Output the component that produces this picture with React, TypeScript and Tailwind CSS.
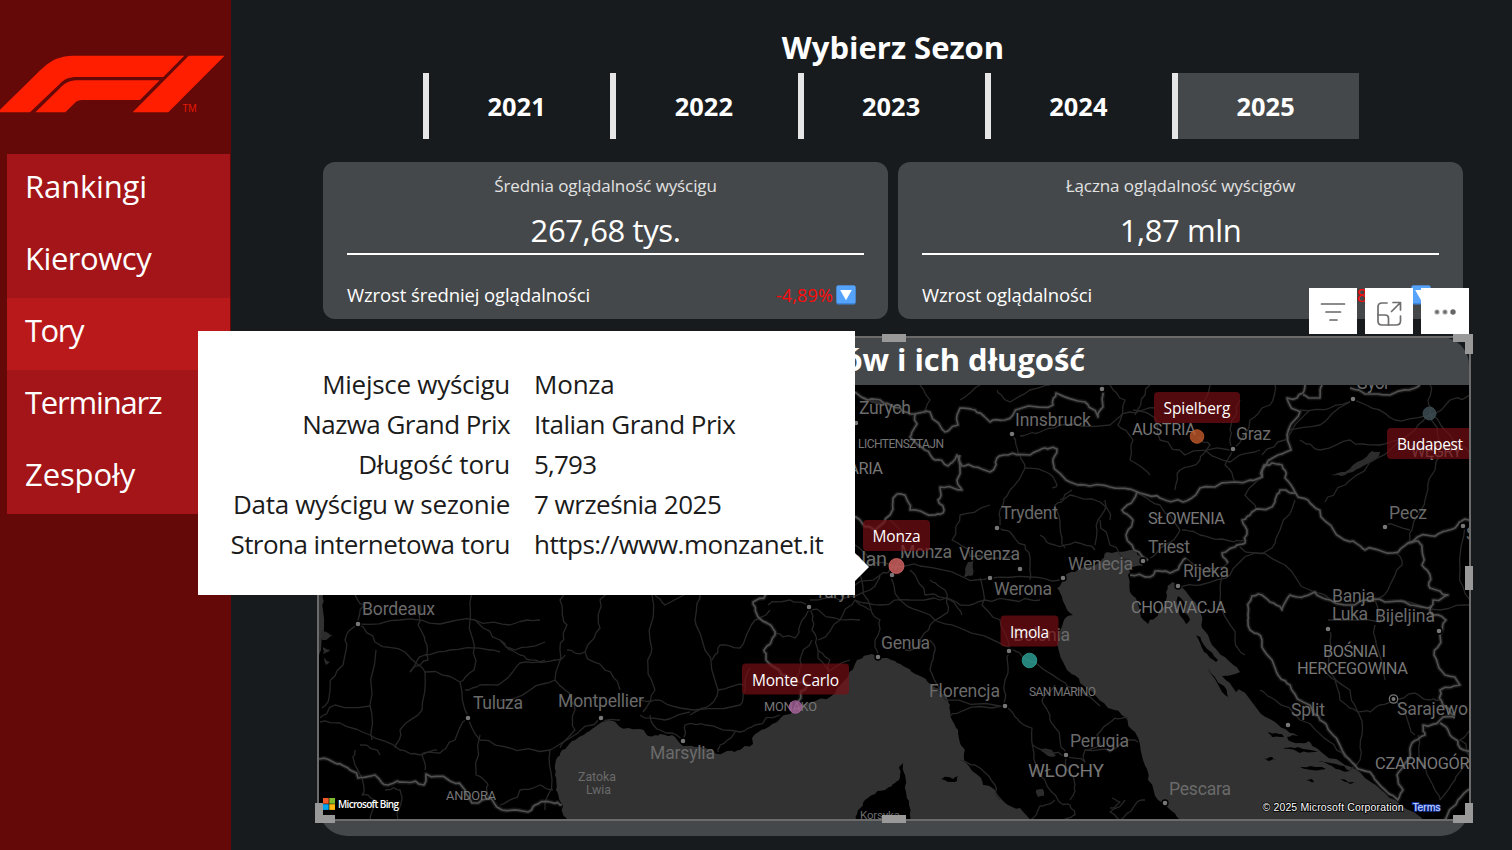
import React from "react";

type Pt = [number, number];

const NAV = [
  { label: "Rankingi", fit: "tracking-[-0.15px]" },
  { label: "Kierowcy", fit: "tracking-[-0.45px]" },
  { label: "Tory", fit: "tracking-[-1.5px]" },
  { label: "Terminarz", fit: "tracking-[-1.2px]" },
  { label: "Zespoły", fit: "tracking-[-0.1px]" },
];
const SEASONS = ["2021", "2022", "2023", "2024", "2025"];

const DETAILS = [
  { label: "Miejsce wyścigu", value: "Monza", lf: "tracking-[-0.28px]", vf: "tracking-[-0.2px]" },
  { label: "Nazwa Grand Prix", value: "Italian Grand Prix", lf: "tracking-[-0.55px]", vf: "tracking-[-0.5px]" },
  { label: "Długość toru", value: "5,793", lf: "tracking-[-0.2px]", vf: "tracking-[-0.8px]" },
  { label: "Data wyścigu w sezonie", value: "7 września 2025", lf: "tracking-[-0.32px]", vf: "tracking-[-0.5px]" },
  { label: "Strona internetowa toru", value: "https://www.monzanet.it", lf: "tracking-[-0.55px]", vf: "tracking-[-0.5px]" },
];

/* ---------- map geometry ---------- */

let seed = 7;
function rnd() {
  seed = (seed * 16807) % 2147483647;
  return seed / 2147483647 - 0.5;
}

function parse(s: string): Pt[] {
  return s.split(" ").map((p) => p.split(",").map(Number) as Pt);
}

// Subdivides a polyline and shifts the new points a little, for coast and border shapes.
function rough(s: string, amp: number, closed = false): string {
  let pts = parse(s);
  if (closed) pts = [...pts, pts[0]];
  for (let pass = 0; pass < 2; pass++) {
    const out: Pt[] = [pts[0]];
    for (let i = 1; i < pts.length; i++) {
      const [ax, ay] = pts[i - 1];
      const [bx, by] = pts[i];
      const d = Math.hypot(bx - ax, by - ay);
      if (d > 4) {
        const k = Math.min(d * 0.35, amp);
        out.push([(ax + bx) / 2 + rnd() * k, (ay + by) / 2 + rnd() * k]);
      }
      out.push([bx, by]);
    }
    pts = out;
  }
  return "M" + pts.map((p) => p[0].toFixed(1) + " " + p[1].toFixed(1)).join("L") + (closed ? "Z" : "");
}

const SEAS = [
  "568,822 563,806 556,790 555,775 556,760 562,750 572,741 585,734 595,727 608,720 613,721 620,727 640,729 648,736 660,734 672,735 683,746 697,747 708,749 717,754 727,751 740,750 753,744 752,738 765,729 777,722 785,715 795,709 812,702 830,697 845,680 855,664 868,655 885,658 895,661 905,667 918,675 930,684 945,695 950,705 952,720 958,733 965,750 966,763 975,773 983,785 995,790 1002,800 1020,808 1032,822",
  "1062,597 1057,588 1062,577 1075,572 1085,567 1100,562 1107,552 1112,553 1130,550 1140,556 1149,560 1142,566 1130,568 1128,575 1132,595 1140,612 1148,624 1155,618 1164,607 1166,592 1172,582 1180,584 1190,597 1200,612 1202,628 1212,645 1230,662 1240,672 1222,676 1240,690 1258,710 1275,722 1290,733 1310,742 1325,755 1345,765 1365,778 1385,793 1400,805 1425,822 1182,822 1165,805 1158,800 1148,780 1143,760 1135,732 1125,717 1108,708 1095,695 1080,683 1067,670 1060,655 1058,647 1060,635 1063,623 1073,615 1065,605",
  "319,590 325,590 323,610 321,650 319,655",
];

const ISLANDS = [
  "856,822 858,810 865,800 872,795 885,790 895,783 899,780 899,768 903,763 905,775 906,792 909,805 909,822",
  "941,779 948,777 953,779 958,776 957,781 948,782",
  "1178,596 1186,604 1184,612 1190,620 1186,624 1179,612",
  "1194,632 1204,645 1218,660 1216,662 1204,652",
  "1208,668 1224,686 1230,700 1222,692",
  "1225,675 1240,688 1236,692",
  "1287,737 1300,736 1312,740 1306,743 1292,742",
  "1268,732 1282,734 1284,737 1272,737",
  "1283,748 1298,747 1318,752 1300,753",
  "1300,767 1320,767 1326,769 1306,769",
  "1318,762 1336,764 1350,771 1336,769",
  "1264,759 1272,757 1276,760 1268,761",
  "1306,780 1312,779 1314,782",
  "1340,779 1356,783 1350,784",
  "1222,640 1250,662 1258,684 1245,670",
];

const LAKES = [
  "1330,475 1345,472 1362,460 1372,451 1380,452 1376,459 1360,468 1345,475",
  "964,577 968,562 974,560 973,575",
  "322,630 333,636 322,640",
  "323,647 330,650 323,654",
  "324,658 330,662 326,665",
  "860,396 868,400 876,400 884,404 876,405 866,402",
  "1040,749 1052,750 1056,756 1048,756",
  "1036,790 1043,789 1044,796 1038,797",
];

const BORDERS = [
  "855,392 868,400 880,400 900,408 915,414 917,424 910,437 925,450 935,460 948,466 957,455 962,466 975,467 990,472 997,458 1008,455 1030,455 1045,448 1057,449 1053,462 1066,480 1085,485 1110,487 1140,493 1160,498 1183,502 1200,488 1235,482 1262,477 1264,465 1272,463 1282,465 1285,478 1295,492 1310,503 1325,521 1340,537 1353,541 1365,550 1393,553 1408,543 1432,536 1440,533 1455,528 1463,520 1472,521",
  "915,414 930,412 945,432 958,425 960,408 975,410 990,422 1005,420 1022,408 1053,405 1056,393 1085,402 1098,417 1103,407 1102,385",
  "960,455 957,480 962,490 940,487 938,500 943,513 935,515 910,510 905,495 897,494 890,515 875,530 860,520 850,512",
  "1137,492 1122,510 1133,520 1126,535 1134,550 1148,560",
  "1130,575 1150,577 1155,571 1170,573 1182,562 1186,558 M",
  "1228,563 1222,553 1235,547 1245,543 1247,530 1242,520 1252,512 1275,502 1280,490 1295,493",
  "1408,543 1418,541 1422,565 1430,575 1430,588 1448,595 1433,600 1432,615 1446,620 1440,635 1434,655 1445,675 1460,685 1440,690 1443,705 1455,716",
  "1432,607 1410,605 1385,602 1365,600 1345,605 1330,600 1315,592 1305,596 1290,595 1282,610 1270,602 1262,595 1252,596 1248,615 1250,630 1262,640 1272,660 1278,675 1290,685 1303,702 1320,720 1333,735 1345,755 1355,765 1370,772 1385,790 1398,800 1403,790 1397,775 1410,758 1412,743 1425,735 1423,725 1440,720 1455,718",
  "770,592 753,602 758,617 772,627 775,635 764,650 766,660 782,675 795,680 808,685 798,702",
  "319,759 335,763 348,768 358,778 375,775 388,785 402,782 424,785 426,774 450,781 465,790 472,803 490,798 502,810 528,812 535,805 550,802 562,805",
  "1305,385 1303,393 1287,398 1296,410 1300,412 1287,435 1291,450 1278,455 1262,470 1262,478",
  "1303,395 1320,398 1322,385",
  "1350,388 1365,394 1390,395 1415,388 1420,385",
  "1440,723 1450,735 1460,748 1472,751",
  "1443,822 1458,800 1470,789",
].map((s) => s.replace(" M", ""));

const ROADS = [
  "920,385 930,400 925,414", "960,400 980,385", "997,390 1010,402 1030,390 1050,385",
  "1020,436 1040,432 1060,425 1110,425 1130,412 1155,408", "1012,435 1018,452 1025,468 1010,490 1000,510 997,528",
  "1025,468 1050,474 1057,485 1052,488", "997,528 1010,532 1025,545 1030,560 1030,580",
  "990,505 960,515 952,540 970,556 990,558 1012,556", "1060,500 1072,490", "1040,535 1055,545 1075,542 1095,550",
  "1105,500 1098,520 1095,545", "1065,548 1060,525 1055,505 1070,495 1100,502 1110,520",
  "855,545 870,560 895,567 920,566 965,578 990,578 1030,577 1060,580", "855,585 880,575 895,566", "890,575 900,600 930,615 960,628 1010,648 1030,661 1060,680",
  "870,560 860,575 868,600 880,620 875,640 878,655", "880,575 870,590 840,600 810,600", "895,570 905,550 900,530 890,520",
  "855,600 880,605 910,600 940,600 960,605 985,600 1010,600 1040,600", "930,580 945,590 948,612", "980,578 982,605 1000,620 1010,650",
  "910,570 925,595 950,600 962,615", "1010,651 1005,680 1002,706 960,712 950,716", "1002,706 1012,712 1020,722 1032,728 1033,748 1036,770 1050,790 1058,800",
  "1058,800 1070,805 1075,815 1062,820", "1055,685 1042,700 1050,720 1060,740 1066,756 1070,772 1075,785 1070,800", "1033,745 1050,752 1066,756",
  "1066,756 1085,762 1085,750 1100,745 1097,735 1115,718 1128,718", "1085,750 1110,752 1125,742 1138,742", "1055,800 1040,806 1030,820",
  "1125,800 1110,812 1120,820 1135,805 1145,800", "1112,798 1120,802 1110,808",
  "960,760 980,768 995,785 1000,800", "930,684 945,700 1000,706",
  "1060,680 1080,690 1100,706", "930,640 935,650 930,670 940,690", "905,650 920,645 930,625 948,612",
  "1110,385 1125,400 1118,425 1133,440 1130,460 1150,475", "1133,410 1155,418 1160,440 1185,455 1230,450", "1197,437 1210,445 1200,460 1180,470 1175,490",
  "1233,449 1225,465 1235,482", "1233,449 1250,420 1270,405 1275,385", "1205,450 1230,462 1260,450", "1240,400 1230,430 1232,448",
  "1287,430 1320,425 1350,402", "1300,410 1330,408 1352,400 1380,410 1395,420 1425,416", "1430,415 1415,430 1395,445 1370,462 1345,485 1325,502",
  "1430,415 1440,445 1435,470 1425,500 1412,530 1408,543", "1430,415 1450,435 1470,455", "1430,415 1450,400 1470,395", "1430,415 1428,400 1430,385",
  "1300,440 1320,450 1350,440 1380,445 1400,440", "1262,455 1285,440 1310,410", "1262,478 1245,495 1256,510", "1295,500 1280,530 1272,548 1255,553",
  "1255,553 1240,547", "1255,553 1230,575 1200,585 1178,585", "1255,553 1285,565 1310,590 1330,600", "1182,530 1200,535 1230,541 1245,540",
  "1137,493 1160,505 1180,530", "1180,530 1165,545 1150,558", "1328,625 1330,640 1328,670 1350,690 1358,712", "1328,620 1380,622 1375,600 1390,585 1402,565 1395,553",
  "1375,625 1378,650 1385,680", "1222,575 1222,610 1235,640 1245,655", "1260,690 1275,700 1300,720 1330,742 1345,758",
  "1393,699 1380,705 1370,712 1358,712 1340,700 1335,680 1320,665", "1358,712 1362,735 1360,760 1350,770", "1393,699 1405,712 1415,735",
  "1393,699 1415,693 1430,700 1440,700", "1418,735 1420,760 1435,790 1440,800", "1470,730 1460,740 1470,760 1455,780 1440,800",
  "1385,525 1410,530", "1465,525 1460,570 1470,600", "1400,600 1440,610 1470,605",
  "1135,415 1145,395 1150,385", "1210,385 1205,400 1185,410", "1100,520 1110,545 1130,560",
  "357,624 375,642 405,652 425,672 460,682 468,716", "357,624 345,640 343,665 330,690 322,708", "357,622 365,605 352,592",
  "357,624 400,620 440,624 475,620 510,625 540,620", "420,605 418,625 427,645 428,660 410,672", "410,672 425,655 450,650 490,650 500,652",
  "472,592 473,640 474,670 460,682", "475,620 500,640 515,650 545,642", "500,640 520,655 530,660 555,660 565,655", "545,660 520,663 505,680 480,685 465,690",
  "500,700 530,690 555,680 560,650 567,625 560,600 565,592", "567,650 585,652 605,670 620,690", "585,652 600,628 600,600 608,592",
  "555,680 565,690 575,710 575,730 560,748", "468,718 455,740 440,753 420,755 400,750 370,735 340,723 320,722",
  "468,718 480,740 510,748 550,750 570,738 600,718", "480,735 476,775 488,785 490,800", "320,718 335,705 370,706", "376,650 370,705 372,740",
  "425,672 422,710 400,730 395,748", "355,750 355,765 362,778 362,795 375,800 370,820", "360,745 380,755", "550,750 552,780 545,810",
  "500,805 520,790 540,785 553,790", "385,790 400,790 398,820", "437,750 422,755 425,770",
  "600,718 620,720", "652,595 650,640 648,668 655,690 643,712", "655,595 665,605 690,592", "700,592 695,620 705,650 718,690 705,708 690,715",
  "640,715 665,720 690,712", "640,700 655,700 680,708 740,705 745,690 750,668", "683,743 685,725 705,725 740,732 755,725 780,715",
  "683,740 660,730 650,715", "735,732 720,745 718,752", "712,660 720,645 740,648 755,620 770,610", "718,690 745,685",
  "809,607 790,600 768,605", "809,607 812,630 818,650 830,670", "809,610 835,618 860,620", "775,633 795,638 800,625 809,610",
  "812,640 800,660 795,680", "818,640 840,620 855,600 870,610", "818,650 830,660 828,672 850,660",
  "1228,563 1205,572 1186,558",
];

const CITIES: Pt[] = [
  [1102, 389], [856, 423], [1012, 434], [1233, 449], [1353, 399], [997, 528], [1020, 569], [990, 578], [892, 575],
  [1063, 578], [1143, 561], [1178, 586], [1385, 527], [1463, 526], [1328, 629], [1439, 631], [1288, 725],
  [1165, 803], [1066, 755], [1005, 706], [1009, 651], [878, 657], [809, 607], [683, 741], [601, 718], [468, 718], [358, 624],
];

type Label = { t: string; x: number; y: number; w: number; s: number; c?: string };
const LABELS: Label[] = [
  { t: "Zurych", x: 859, y: 413.5, w: 52, s: 17.6 },
  { t: "Innsbruck", x: 1015, y: 425.5, w: 76, s: 17.6 },
  { t: "LICHTENSZTAJN", x: 858, y: 448, w: 86, s: 12, c: "#777" },
  { t: "SZWAJCARIA", x: 787, y: 473.5, w: 96, s: 16.4, c: "#777" },
  { t: "AUSTRIA", x: 1132, y: 435, w: 64, s: 16.4, c: "#777" },
  { t: "Graz", x: 1236, y: 440, w: 35, s: 17.6 },
  { t: "Győr", x: 1356, y: 389, w: 34, s: 17.6 },
  { t: "WĘGRY", x: 1411, y: 457, w: 51, s: 16.4, c: "#777" },
  { t: "Trydent", x: 1001, y: 519, w: 57, s: 17.6 },
  { t: "Monza", x: 900, y: 557.5, w: 52, s: 17.6 },
  { t: "Vicenza", x: 959, y: 560, w: 61, s: 17.6 },
  { t: "Mediolan", x: 808, y: 566, w: 79, s: 20 },
  { t: "Werona", x: 994, y: 594.5, w: 58, s: 17.6 },
  { t: "Wenecja", x: 1068, y: 569.5, w: 65, s: 17.6 },
  { t: "SŁOWENIA", x: 1148, y: 524, w: 77, s: 16.4, c: "#777" },
  { t: "Triest", x: 1148, y: 552.5, w: 42, s: 17.6 },
  { t: "Rijeka", x: 1183, y: 576.5, w: 46, s: 17.6 },
  { t: "CHORWACJA", x: 1131, y: 612.5, w: 95, s: 16.4, c: "#777" },
  { t: "Pecz", x: 1389, y: 519, w: 38, s: 17.6 },
  { t: "Segedyn", x: 1466, y: 540, w: 60, s: 17.6 },
  { t: "Banja", x: 1332, y: 602, w: 43, s: 17.6 },
  { t: "Luka", x: 1332, y: 620, w: 36, s: 17.6 },
  { t: "Bijeljina", x: 1375, y: 622, w: 60, s: 17.6 },
  { t: "BOŚNIA I", x: 1323, y: 657, w: 63, s: 16.4, c: "#777" },
  { t: "HERCEGOWINA", x: 1297, y: 674, w: 111, s: 16.4, c: "#777" },
  { t: "Split", x: 1291, y: 716, w: 34, s: 17.6 },
  { t: "Sarajewo", x: 1397, y: 715, w: 71, s: 17.6 },
  { t: "CZARNOGÓRA", x: 1375, y: 769, w: 105, s: 16.4, c: "#777" },
  { t: "Pescara", x: 1169, y: 795, w: 62, s: 17.6 },
  { t: "Perugia", x: 1070, y: 747, w: 59, s: 17.6 },
  { t: "WŁOCHY", x: 1028, y: 777, w: 76, s: 19, c: "#777" },
  { t: "SAN MARINO", x: 1029, y: 695.5, w: 67, s: 12, c: "#777" },
  { t: "Florencja", x: 929, y: 697, w: 71, s: 17.6 },
  { t: "Bolonia", x: 1013, y: 641, w: 57, s: 17.6 },
  { t: "Genua", x: 881, y: 649, w: 49, s: 17.6 },
  { t: "Turyn", x: 815, y: 598, w: 41, s: 17.6 },
  { t: "MONAKO", x: 764, y: 711, w: 53, s: 12.8, c: "#777" },
  { t: "Marsylia", x: 650, y: 759, w: 65, s: 17.6 },
  { t: "Montpellier", x: 558, y: 707, w: 86, s: 17.6 },
  { t: "Tuluza", x: 473, y: 708.5, w: 50, s: 17.6 },
  { t: "Bordeaux", x: 362, y: 615, w: 73, s: 17.6 },
  { t: "ANDORA", x: 446, y: 800, w: 50, s: 12.8, c: "#777" },
  { t: "Zatoka", x: 578, y: 781, w: 38, s: 12.4 },
  { t: "Lwia", x: 586, y: 794, w: 25, s: 12.4 },
  { t: "Korsyka", x: 860, y: 819, w: 40, s: 11.5 },
];

type Circuit = { name: string; x: number; y: number; w: number; tw: number; cx: number; cy: number; r: number; color: string };
const CIRCUITS: Circuit[] = [
  { name: "Spielberg", x: 1154, y: 392, w: 86, tw: 67, cx: 1197, cy: 436.5, r: 6.8, color: "#c25a2b" },
  { name: "Budapest", x: 1387, y: 428, w: 86, tw: 66, cx: 1429.5, cy: 413.5, r: 6.5, color: "#405056" },
  { name: "Monza", x: 863, y: 520, w: 67, tw: 48, cx: 896.5, cy: 566, r: 7.5, color: "#d96565" },
  { name: "Imola", x: 1000.5, y: 615.5, w: 58, tw: 39, cx: 1029.5, cy: 660.5, r: 7.3, color: "#2fa49b" },
  { name: "Monte Carlo", x: 742, y: 663.5, w: 107, tw: 87, cx: 795.5, cy: 707, r: 6.3, color: "#a8639b" },
];

const seaPaths = SEAS.map((s) => rough(s, 4, true));
const islandPaths = ISLANDS.map((s) => rough(s, 3, true));
const lakePaths = LAKES.map((s) => rough(s, 2, true));
const borderPaths = BORDERS.map((s) => rough(s, 6));
const roadPaths = ROADS.map((s) => rough(s, 5));

function CircuitMap() {
  return (
    <svg viewBox="319 385 1150 436" className="block h-[436px] w-[1150px] bg-black" fontFamily="Roboto, sans-serif">
      <g fill="#323232">{seaPaths.map((d, i) => <path key={i} d={d} />)}</g>
      <g fill="#000">{islandPaths.map((d, i) => <path key={i} d={d} />)}</g>
      <g fill="#2c2c2c">{lakePaths.map((d, i) => <path key={i} d={d} />)}</g>
      <g fill="none" stroke="#272727" strokeWidth="1.3" strokeLinejoin="round">
        {roadPaths.map((d, i) => <path key={i} d={d} />)}
      </g>
      <g fill="none" stroke="#2a2a2a" strokeWidth="4.5" strokeOpacity="0.5" strokeLinejoin="round">
        {borderPaths.map((d, i) => <path key={i} d={d} />)}
      </g>
      <g fill="none" stroke="#505050" strokeWidth="1.7" strokeLinejoin="round">
        {borderPaths.map((d, i) => <path key={i} d={d} />)}
      </g>
      {CITIES.map(([x, y], i) => (
        <circle key={i} cx={x} cy={y} r="3" fill="#777" stroke="#000" strokeWidth="1.4" />
      ))}
      <circle cx="1393.5" cy="699" r="4.2" fill="#000" stroke="#777" strokeWidth="1.2" />
      <circle cx="1393.5" cy="699" r="2" fill="#777" />
      {LABELS.map((l) => (
        <text key={l.t} x={l.x} y={l.y} fontSize={l.s} textLength={l.w} fill={l.c ?? "#6a6a6a"}>
          {l.t}
        </text>
      ))}
      {CIRCUITS.map((c) => (
        <g key={c.name}>
          <circle cx={c.cx} cy={c.cy} r={c.r} fill={c.color} fillOpacity="0.8" stroke={c.color} strokeWidth="0.8" />
          <rect x={c.x} y={c.y} width={c.w} height="31" rx="4" fill="#790f14" fillOpacity="0.68" />
          <text
            x={c.x + (c.w - c.tw) / 2}
            y={c.y + 22}
            fontSize="15.5"
            fontWeight="500"
            textLength={c.tw}
            fill="#fff"
            fontFamily="'Open Sans', 'Noto Sans', sans-serif"
          >
            {c.name}
          </text>
        </g>
      ))}
      <rect x="323" y="798" width="5.7" height="5.7" fill="#f1592a" />
      <rect x="329.3" y="798" width="5.7" height="5.7" fill="#80bb2f" />
      <rect x="323" y="804.2" width="5.7" height="5.7" fill="#00a3ee" />
      <rect x="329.3" y="804.2" width="5.7" height="5.7" fill="#fdb913" />
      <text x="338" y="807.5" fontSize="10" fontWeight="600" textLength="61" fill="#fff" fontFamily="'Open Sans', sans-serif">
        Microsoft Bing
      </text>
      <g fontFamily="'Liberation Sans', Arial, sans-serif" fontSize="10.5" stroke="#000" strokeWidth="1.6" paintOrder="stroke">
        <text x="1262.5" y="810.5" textLength="141" fill="#fff">© 2025 Microsoft Corporation</text>
        <text x="1412.5" y="810.5" textLength="28" fill="#cdd8ff" stroke="#1c3fb0">Terms</text>
      </g>
    </svg>
  );
}

function F1Logo() {
  return (
    <svg viewBox="0 0 693 200" className="mt-[50px] block h-[66.67px] w-[231px]" fill="#ff1e00">
      <path d="M0 179 L110 71 C148 34 170 17 228 17 H553 L490 81 H232 C205 81 194 87 180 101 L90 187 H0Z" />
      <path d="M106 187 L178 116 C196 98 208 91 235 91 H479 L420 150 H250 C236 150 230 153 222 161 L196 187Z" />
      <path d="M566 17 H674 L505 187 H398Z" />
      <text x="547" y="187" fontSize="30" textLength="43" fillOpacity="0.85" fontFamily="'Liberation Sans', Arial, sans-serif">TM</text>
    </svg>
  );
}

function DownBadge() {
  return (
    <svg viewBox="0 0 20 20" className="ml-[3px] h-5 w-5">
      <rect x="0.5" y="0.5" width="19" height="19" rx="1.5" fill="#3f86dd" />
      <rect x="0.5" y="0.5" width="19" height="17.5" rx="1.5" fill="#55a3fa" />
      <path d="M4.2 5h11.6L10 15.2Z" fill="#fff" />
    </svg>
  );
}

function StatCard(p: { title: string; value: string; growth: string; change: string }) {
  return (
    <div className="flex h-[157px] w-[565px] flex-col rounded-xl bg-[#45484a] px-6 text-white">
      <div className="mt-[12px] text-center text-[17px] leading-[24px] tracking-[-0.1px] text-[#e2e2e2]">{p.title}</div>
      <div className="mt-[12px] h-[45px] w-[517px] border-b-2 border-white text-center text-[31px] leading-[40px] tracking-[-0.4px]">
        {p.value}
      </div>
      <div className="mt-[27px] flex h-[26px] items-center pr-2 text-[18.5px] leading-[26px] tracking-[-0.1px]">
        <span className="flex-1">{p.growth}</span>
        <span className="text-[18px] tracking-[0.15px] text-[#ff0a0a]">{p.change}</span>
        <DownBadge />
      </div>
    </div>
  );
}

function VisualToolbar() {
  return (
    <div className="absolute top-[288px] left-[1309px] flex gap-2">
      <div className="h-[46px] w-12 bg-white">
        <svg viewBox="0 0 48 46" className="h-[46px] w-12" stroke="#666" strokeWidth="1.7" strokeLinecap="round">
          <path d="M12.5 16H35.5M17 24H31.5M21 32H28" />
        </svg>
      </div>
      <div className="h-[46px] w-12 bg-white">
        <svg viewBox="0 0 48 46" className="h-[46px] w-12" fill="none" stroke="#6e6e6e" strokeWidth="1.7" strokeLinecap="round" strokeLinejoin="round">
          <path d="M22 15H17Q13 15 13 19V33Q13 37 17 37H31Q35.5 37 35.5 33V28" />
          <path d="M13 27H20Q23.5 27 23.5 30V37" />
          <path d="M26.5 23.5L35 15M28 14.5H35.5V22" />
        </svg>
      </div>
      <div className="h-[46px] w-12 bg-white">
        <svg viewBox="0 0 48 46" className="h-[46px] w-12" fill="#666">
          <circle cx="16" cy="24" r="2.6" fill="#a5a5a5" />
          <circle cx="16" cy="24" r="1.4" />
          <circle cx="24" cy="24" r="2.6" fill="#a5a5a5" />
          <circle cx="24" cy="24" r="1.4" />
          <circle cx="32" cy="24" r="2.7" />
        </svg>
      </div>
    </div>
  );
}

function SelectionFrame() {
  return (
    <div className="absolute inset-x-[-2px] top-[-1px] h-[485px] border-2 border-[#6b6b6b]">
      <div className="absolute top-[-4px] left-[563px] h-2 w-6 bg-[#999]" />
      <div className="absolute bottom-[-4px] left-[563px] h-2 w-6 bg-[#999]" />
      <div className="absolute top-[228px] right-[-4px] h-6 w-2 bg-[#999]" />
      <div className="absolute top-[-4px] right-[-4px] h-5 w-5 border-t-8 border-r-8 border-[#999]" />
      <div className="absolute right-[-4px] bottom-[-4px] h-5 w-5 border-r-8 border-b-8 border-[#999]" />
      <div className="absolute bottom-[-4px] left-[-4px] h-5 w-5 border-b-8 border-l-8 border-[#999]" />
    </div>
  );
}

function CircuitTooltip() {
  return (
    <div className="absolute top-[331px] left-[198px] h-[264px] w-[657px] bg-white pt-[33px] text-[26px] text-[#1b1b1b]">
      {DETAILS.map((d) => (
        <div key={d.label} className="flex h-10 items-center gap-6 leading-10 whitespace-nowrap">
          <span className={"w-[312px] text-right " + d.lf}>{d.label}</span>
          <span className={d.vf}>{d.value}</span>
        </div>
      ))}
      <svg viewBox="0 0 14 28" className="absolute top-[222px] left-[657px] h-7 w-[14px]">
        <path d="M0 0L14 14L0 28Z" fill="#fff" />
      </svg>
    </div>
  );
}

export default function App() {
  return (
    <div className="relative flex h-[850px] w-[1512px] overflow-hidden bg-[#171b1e] font-['Open_Sans','Noto_Sans',sans-serif]">
      <aside className="w-[231px] shrink-0 bg-[#640808]">
        <F1Logo />
        <nav className="mt-[37.33px] ml-[7px] w-[223px] text-[31px] leading-[64px] text-white">
          {NAV.map((n) => (
            <a
              key={n.label}
              className={
                (n.label === "Tory" ? "block h-[72px] bg-[#b9191b] pl-[18px] " : "block h-[72px] bg-[#a31518] pl-[18px] ") + n.fit
              }
            >
              {n.label}
            </a>
          ))}
        </nav>
      </aside>

      <main className="flex flex-1 flex-col">
        <h1 className="mt-[25px] ml-[92px] w-[1140px] text-center text-[31px] leading-[44px] font-bold text-white">Wybierz Sezon</h1>
        <div className="mt-[3.5px] ml-[192px] flex h-[66px]">
          {SEASONS.map((s) => (
            <button
              key={s}
              className={
                s === "2025"
                  ? "h-[66px] w-[187.25px] border-l-[6px] border-[#e6e6e6] bg-[#45484a] pt-[2px] pr-[6px] text-[25.4px] font-bold text-white"
                  : "h-[66px] w-[187.25px] border-l-[6px] border-[#e6e6e6] pt-[2px] pr-[6px] text-[25.4px] font-bold text-white"
              }
            >
              {s}
            </button>
          ))}
        </div>
        <div className="mt-[23.5px] ml-[92px] flex gap-[10px]">
          <StatCard title="Średnia oglądalność wyścigu" value="267,68 tys." growth="Wzrost średniej oglądalności" change="-4,89%" />
          <StatCard title="Łączna oglądalność wyścigów" value="1,87 mln" growth="Wzrost oglądalności" change="-8,46%" />
        </div>
        <section className="relative mt-[18px] ml-[88px] h-[499px] w-[1150px] rounded-[28px] bg-[#45484a]">
          <h2 className="h-[48px] text-center text-[31px] leading-[44px] font-bold tracking-[-0.05px] text-white">Mapa torów i ich długość</h2>
          <CircuitMap />
          <SelectionFrame />
        </section>
      </main>

      <VisualToolbar />
      <CircuitTooltip />
    </div>
  );
}
